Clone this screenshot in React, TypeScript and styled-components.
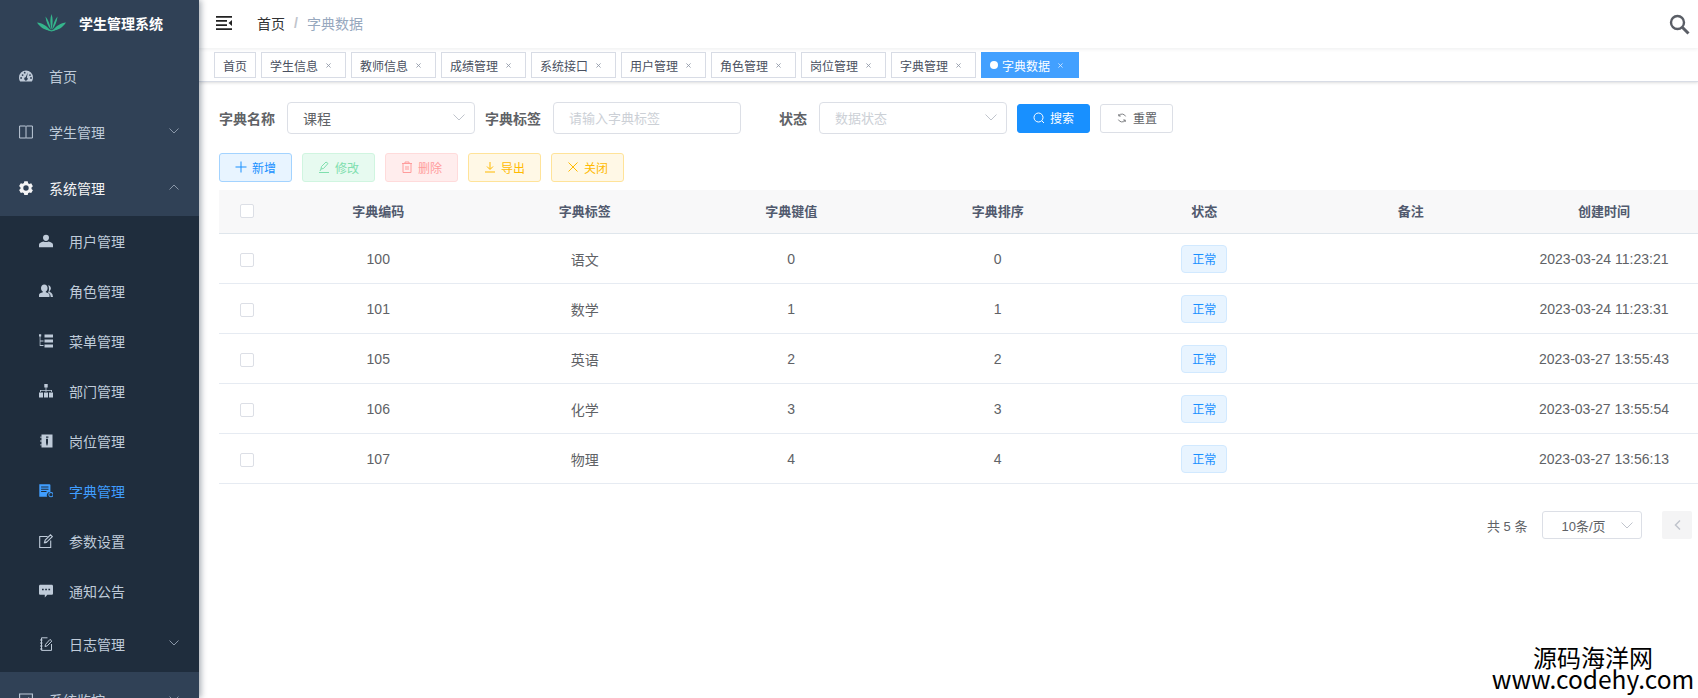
import React from "react";
import styled, { createGlobalStyle } from "styled-components";

const Global = createGlobalStyle`
  html, body { margin: 0; padding: 0; height: 100%; overflow: hidden; background: #fff; }
  body { font-family: "Liberation Sans", "Noto Sans CJK SC", sans-serif; }
  #root { height: 100%; }
  * { box-sizing: border-box; }
`;

const Shell = styled.div`
  display: flex; width: 1698px; height: 698px; overflow: hidden; position: relative;
`;
const Sidebar = styled.aside`
  width: 199px; flex: none; height: 100%; overflow: hidden; background: #304156;
  box-shadow: 2px 0 6px rgba(0, 21, 41, 0.35); position: relative; z-index: 3;
`;
const Brand = styled.div`
  height: 48px; display: flex; align-items: center; padding: 0 0 2px 37px; gap: 13px;
  color: #fff; font-size: 14px; font-weight: 700;
`;
const MenuItem = styled.div<{ $sub?: boolean; $active?: boolean; $tall?: boolean; $open?: boolean }>`
  display: flex; align-items: center; position: relative;
  height: ${(p) => (p.$sub && !p.$tall ? 50 : 56)}px;
  padding-left: ${(p) => (p.$sub ? 39 : 19)}px;
  background: ${(p) => (p.$sub ? "#1f2d3d" : "#304156")};
  color: ${(p) => (p.$active ? "#409eff" : p.$open ? "#f4f4f5" : "#bfcbd9")};
  font-size: 14px;
  svg.menu-icon { width: 14px; height: 14px; margin-right: 16px; flex: none; }
`;
const Arrow = styled.svg`
  position: absolute; right: 20px; top: 50%; margin-top: -4px; width: 10px; height: 6px;
  fill: none; stroke: #8a97a8; stroke-width: 1;
`;
const SubMenu = styled.div``;

const Main = styled.main`
  flex: 1; min-width: 0; display: flex; flex-direction: column; overflow: hidden;
`;
const Navbar = styled.header`
  height: 48px; flex: none; display: flex; align-items: center; padding: 0 8px 2px 17px;
  box-shadow: 0 1px 4px rgba(0, 21, 41, 0.08); position: relative; z-index: 2; background: #fff;
`;
const Crumbs = styled.div`
  display: flex; align-items: center; margin-left: 25px; font-size: 14px; color: #303133; flex: 1;
`;
const CrumbSep = styled.span`
  margin: 0 9px; color: #c0c4cc; font-weight: 700;
`;
const CrumbNow = styled.span`
  color: #97a8be;
`;
const TagBar = styled.nav`
  height: 34px; flex: none; display: flex; align-items: flex-start; padding: 4px 0 0 15px; gap: 5px;
  background: #fff; border-bottom: 1px solid #d8dce5;
  box-shadow: 0 1px 3px rgba(0, 0, 0, 0.12), 0 0 3px rgba(0, 0, 0, 0.04);
  position: relative; z-index: 1;
`;
const Tag = styled.span<{ $active?: boolean; $home?: boolean }>`
  height: 26px; display: inline-flex; align-items: center; font-size: 12px;
  padding: 0 ${(p) => (p.$home ? 8 : 0)}px 0 8px;
  width: ${(p) => (p.$home ? 42 : p.$active ? 98 : 85)}px;
  border: 1px solid ${(p) => (p.$active ? "#42a0ff" : "#d8dce5")};
  background: ${(p) => (p.$active ? "#42a0ff" : "#fff")};
  color: ${(p) => (p.$active ? "#fff" : "#495060")};
`;
const TagDot = styled.i`
  width: 8px; height: 8px; border-radius: 50%; background: #fff; margin-right: 4px; flex: none;
`;
const TagClose = styled.svg<{ $active?: boolean }>`
  width: 5px; height: 5px; margin-left: 8px; stroke: ${(p) => (p.$active ? "#d6e9ff" : "#8d95a3")}; stroke-width: 1; fill: none;
`;
const Content = styled.section`
  padding: 20px 0 0 20px; flex: 1; width: 1499px;
`;
const QueryForm = styled.form`
  display: flex; align-items: center; gap: 10px; height: 32px;
`;
const FormItem = styled.div`
  display: flex; align-items: center;
`;
const Label = styled.label`
  width: 68px; padding-right: 12px; text-align: right; font-size: 14px; font-weight: 700; color: #606266; white-space: nowrap;
`;
const Field = styled.div<{ $placeholder?: boolean }>`
  width: 188px; height: 32px; border: 1px solid #dcdfe6; border-radius: 4px; display: flex; align-items: center;
  justify-content: space-between; padding: 0 9px 1px 15px; font-size: ${(p) => (p.$placeholder ? 13 : 14)}px;
  color: ${(p) => (p.$placeholder ? "#ccd0d6" : "#606266")};
`;
const Chevron = styled.svg`
  width: 12px; height: 7px; fill: none; stroke: #c0c4cc; stroke-width: 1;
`;
const Button = styled.button<{ $kind: string }>`
  width: 73px; height: 29px; padding: 0 0 1px; font: inherit; font-size: 12px; border-radius: 3px; display: inline-flex;
  align-items: center; justify-content: center; gap: 5px; border: 1px solid;
  svg { width: 12px; height: 12px; fill: none; stroke: currentColor; stroke-width: 1; }
  ${(p) =>
    ({
      primary: "background:#1890ff;border-color:#1890ff;color:#fff;",
      plain: "background:#fff;border-color:#dcdfe6;color:#606266;",
      add: "background:#e8f4ff;border-color:#a3d3ff;color:#1890ff;",
      edit: "background:#e7faf0;border-color:#d0f5e0;color:#7fdfae;",
      del: "background:#ffeded;border-color:#ffdbdb;color:#ff9c9c;",
      warn: "background:#fff8e6;border-color:#ffe399;color:#ffba00;",
    } as Record<string, string>)[p.$kind]}
`;
const Toolbar = styled.div`
  display: flex; gap: 10px; margin-top: 19px;
`;
const Table = styled.table`
  margin-top: 8px; border-collapse: separate; border-spacing: 0; table-layout: fixed; width: 1675px;
`;
const Th = styled.th`
  height: 44px; padding: 0 0 2px; background: #f8f8f9; border-bottom: 1px solid #dfe6ec; font-size: 13px; font-weight: 700; color: #515a6e; text-align: center;
`;
const Td = styled.td`
  height: 50px; padding: 0; border-bottom: 1px solid #e6ebf2; font-size: 14px; color: #606266; text-align: center;
`;
const Check = styled.span`
  display: inline-block; width: 14px; height: 14px; border: 1px solid #dcdfe6; border-radius: 2px; background: #fff; vertical-align: middle;
`;
const Status = styled.span`
  display: inline-flex; align-items: center; justify-content: center; width: 46px; height: 28px; border: 1px solid #d1e9ff; border-radius: 4px;
  background: #e8f4ff; color: #1890ff; font-size: 12px; vertical-align: middle;
`;
const Pager = styled.div`
  display: flex; align-items: center; height: 28px; margin-top: 27px; padding-left: 1268px; font-size: 13px; color: #606266;
`;
const PagerSelect = styled.div`
  width: 100px; height: 28px; margin-left: 15px; border: 1px solid #dcdfe6; border-radius: 3px; display: flex; align-items: center;
  justify-content: space-between; padding: 0 8px 0 18px; color: #606266;
`;
const PagerPrev = styled.div`
  width: 30px; height: 28px; margin-left: 20px; background: #f4f4f5; border-radius: 2px; display: flex; align-items: center; justify-content: center;
  svg { width: 7px; height: 10px; fill: none; stroke: #c0c4cc; stroke-width: 1.5; }
`;
const Watermark = styled.div`
  position: absolute; right: 3px; bottom: 8px; width: 204px; text-align: center; color: #000; font-size: 24px; line-height: 22px;
  font-family: "Noto Sans CJK SC", "Noto Sans", sans-serif; z-index: 5;
`;
const WatermarkUrl = styled.div`
  font-size: 24.5px;
`;
const HeaderSearch = styled.svg`
  width: 21px; height: 21px; margin-top: 2px; fill: none; stroke: #5a5e66; stroke-width: 2.4;
`;
const Hamburger = styled.svg`
  width: 16px; height: 14px; fill: #222; flex: none; margin-top: -1px;
`;

const P = {
  dashboard: <path fillRule="evenodd" d="M7 1.500A7 7 0 0 0 0 8.500c0 1.600.5 2.900 1.200 4h11.600c.7-1.100 1.200-2.400 1.200-4a7 7 0 0 0-7-7zM2.700 6.100a.9.9 0 1 1 1.800 0 .9.900 0 0 1-1.800 0zM4.800 3.700a.9.900 0 1 1 1.800 0 .9.900 0 0 1-1.800 0zM11 7a.9.900 0 1 1 0-1.800.9.900 0 0 1 0 1.800zM1.200 9a.9.900 0 1 1 1.800 0 .9.900 0 0 1-1.800 0zM12 9.900a.9.900 0 1 1 0-1.800.9.900 0 0 1 0 1.800zM8.800 3.500l-.9 4.900a1.700 1.700 0 1 1-1.300-.2z" />,
  book: <path d="M.6 1h5.600c.4 0 .7.300.8.500.1-.2.400-.5.800-.5h5.600v12H7.800c-.4 0-.7.200-.8.400-.1-.2-.4-.4-.8-.4H.6zM7 1.500v11.500" fill="none" stroke="currentColor" strokeWidth="1" />,
  gear: <path fillRule="evenodd" d="M5.300.3h3.400l.4 1.900 1.200.7 1.900-.6 1.700 2.900-1.400 1.300v1.400l1.400 1.300-1.700 2.900-1.900-.6-1.200.7-.4 1.900H5.300l-.4-1.900-1.200-.7-1.900.6L.1 9.100l1.400-1.300V6.400L.1 5.100l1.700-2.900 1.900.6 1.200-.7zM7 4.300a2.700 2.700 0 1 0 0 5.400 2.700 2.700 0 0 0 0-5.400z" />,
  user: <path d="M7 .8a3 3 0 0 1 3 3c0 1.700-1.300 3.300-3 3.300S4 5.500 4 3.800a3 3 0 0 1 3-3zM4.500 7.500c1.500.8 3.500.8 5 0 2.300.4 4.500 1.600 4.500 3.200v2.500H0v-2.500c0-1.600 2.200-2.800 4.500-3.200z" />,
  peoples: <path d="M5.300.5C7.200.5 8.600 2.100 8.600 4c0 1.600-.8 3-1.800 3.500v.7c2 .4 3.700 1.300 3.700 2.800v2H0v-2c0-1.500 1.700-2.400 3.800-2.800v-.7C2.800 7 2 5.600 2 4 2 2.100 3.400.5 5.300.5zM9.200 1.200c1.500.2 2.700 1.400 2.700 3 0 1.200-.6 2.200-1.400 2.700v.8c1.200.5 2.400 1.300 2.900 2.500l.6 2.800h-2.300c0-1.800-.6-3.400-2.700-4.500.6-.9 1-2 1-3.300 0-1.700-.3-3-.8-4z" />,
  tree: <path d="M0 .3h2.200v2.200H0zM5.500 .5H14v3H5.500zM5.500 5.500H14v3H5.500zM5.500 10.500H14v3H5.500zM.7 2.500h.7v4.100h3.100v.8H1.400v3.700h3.100v.8H.7z" />,
  org: <path d="M5.300 0h3.400v3.500H5.300zM6.600 3.500h.8v2.400H13v2h-.8V6.700H7.400v1.200h-.8V6.700H1.800v1.200H1v-2h5.600zM0 8.500h4v5H0zM5 8.500h4v5H5zM10 8.500h4v5h-4z" />,
  post: <path fillRule="evenodd" d="M2.500.5h11v13h-11v-2.200H1v-.9h1.500V7.400H1v-.9h1.500V3.600H1v-.9h1.500zM7 2.500v1.300h2.400V2.500zm0 2.300v4.300l.6 2.400h.8l.6-2.400V4.800z" />,
  dict: <path fillRule="evenodd" d="M.3.200h10.200c.5 0 .9.400.9.900v7a3.200 3.200 0 0 0-3.200 4.700H.3zm1.800 2.400v1h7.400v-1zm0 2.200v1h7.400v-1zm0 2.200v1h5.400v-1zM12 9a1.600 1.600 0 1 1-.1 3.300A1.600 1.600 0 0 1 12 9zm0-1a2.600 2.600 0 1 0 0 5.200A2.600 2.600 0 0 0 12 8z" />,
  edit: <path d="M8.500 2.500H.7v11h11V6.500M5.500 8.500l.7-2.500L11.500.8l1.800 1.800-5.300 5.200zM5.500 9l2.600-.8" fill="none" stroke="currentColor" strokeWidth="1.100" />,
  chat: <path fillRule="evenodd" d="M1.300.8h11.400c.7 0 1.300.6 1.300 1.300v7.300c0 .7-.6 1.300-1.300 1.300H8.300L5.800 13.500v-2.800H1.300c-.7 0-1.300-.6-1.300-1.300V2.100C0 1.400.6.800 1.300.8zM3 4.800v1.500h1.700V4.800zm3.200 0v1.500h1.700V4.800zm3.200 0v1.500h1.700V4.800z" />,
  log: <path d="M8.500.8H2.500v12.600h10V7M1 3h2.500M1 6h2.500M1 9h2.500M1 12h2.500M6 9.500l.6-2.200L11 2.400l1.800 1.700-4.600 4.800z" fill="none" stroke="currentColor" strokeWidth="1" />,
  monitor: <path d="M.6 1h12.800v12H.6zM4 7.500l2 2 4-5" fill="none" stroke="currentColor" strokeWidth="1.100" />,
};

const Icon = ({ name }: { name: keyof typeof P }) => (
  <svg className="menu-icon" viewBox="0 0 14 14" fill="currentColor">{P[name]}</svg>
);
const ArrowIcon = ({ up }: { up?: boolean }) => (
  <Arrow viewBox="0 0 10 6"><path d={up ? "M.5 5.500 5 1l4.500 4.500" : "M.5.500 5 5 9.500.500"} /></Arrow>
);
const ChevronDown = () => (
  <Chevron viewBox="0 0 12 7"><path d="M.5.500 6 6 11.500.500" /></Chevron>
);

const subs: [string, keyof typeof P][] = [
  ["用户管理", "user"], ["角色管理", "peoples"], ["菜单管理", "tree"], ["部门管理", "org"],
  ["岗位管理", "post"], ["字典管理", "dict"], ["参数设置", "edit"], ["通知公告", "chat"],
];
const tags = ["学生信息", "教师信息", "成绩管理", "系统接口", "用户管理", "角色管理", "岗位管理", "字典管理"];
const rows = [
  ["100", "语文", "0", "0", "2023-03-24 11:23:21"],
  ["101", "数学", "1", "1", "2023-03-24 11:23:31"],
  ["105", "英语", "2", "2", "2023-03-27 13:55:43"],
  ["106", "化学", "3", "3", "2023-03-27 13:55:54"],
  ["107", "物理", "4", "4", "2023-03-27 13:56:13"],
];
const X = ({ active }: { active?: boolean }) => (
  <TagClose $active={active} viewBox="0 0 6 6"><path d="M.5.500l5 5M5.500.500l-5 5" /></TagClose>
);

export default function App() {
  return (
    <Shell>
      <Global />
      <Sidebar>
        <Brand>
          <svg width="29" height="18" viewBox="0 0 29 18">
            <g fill="#35b58c">
              <path d="M14.500 0c1.500 4 1.500 9 0 16-1.500-7-1.500-12 0-16z" />
              <path d="M8.500 2.500c2.500 3 4.500 8 5.500 13.500-3-4-5-8.500-5.500-13.500z" />
              <path d="M20.500 2.500c-2.500 3-4.500 8-5.500 13.500 3-4 5-8.500 5.500-13.500z" />
              <path d="M0 8.500c5 .5 10 3.500 13.500 8-5 0-10.500-3-13.500-8z" />
              <path d="M29 8.500c-5 .5-10 3.500-13.500 8 5 0 10.500-3 13.500-8z" />
              <path d="M8 14.500c2 1.500 4.500 2.500 6.500 3 2-.5 4.500-1.500 6.500-3-2 .5-4.500 1.500-6.500 1.800-2-.3-4.500-1.300-6.500-1.800z" />
            </g>
          </svg>
          学生管理系统
        </Brand>
        <MenuItem><Icon name="dashboard" />首页</MenuItem>
        <MenuItem><Icon name="book" />学生管理<ArrowIcon /></MenuItem>
        <MenuItem $open><Icon name="gear" />系统管理<ArrowIcon up /></MenuItem>
        <SubMenu>
          {subs.map(([t, i]) => (
            <MenuItem key={t} $sub $active={t === "字典管理"}><Icon name={i} />{t}</MenuItem>
          ))}
          <MenuItem $sub $tall><Icon name="log" />日志管理<ArrowIcon /></MenuItem>
        </SubMenu>
        <MenuItem><Icon name="monitor" />系统监控<ArrowIcon /></MenuItem>
      </Sidebar>
      <Main>
        <Navbar>
          <Hamburger viewBox="0 0 16 14">
            <path d="M0 0h16v1.700H0zM0 4.100h11v1.700H0zM0 8.200h11v1.700H0zM0 12.300h16V14H0zM16 4v6l-3.500-3z" />
          </Hamburger>
          <Crumbs>首页<CrumbSep>/</CrumbSep><CrumbNow>字典数据</CrumbNow></Crumbs>
          <HeaderSearch viewBox="0 0 21 21"><circle cx="8.500" cy="8.500" r="6.500" /><path d="M13.500 13.500l6 6" strokeWidth="3" /></HeaderSearch>
        </Navbar>
        <TagBar>
          <Tag $home>首页</Tag>
          {tags.map((t) => <Tag key={t}>{t}<X /></Tag>)}
          <Tag $active><TagDot />字典数据<X active /></Tag>
        </TagBar>
        <Content>
          <QueryForm>
            <FormItem><Label>字典名称</Label><Field>课程<ChevronDown /></Field></FormItem>
            <FormItem><Label>字典标签</Label><Field $placeholder>请输入字典标签</Field></FormItem>
            <FormItem><Label>状态</Label><Field $placeholder>数据状态<ChevronDown /></Field></FormItem>
            <Button type="button" $kind="primary"><svg viewBox="0 0 12 12"><circle cx="5.500" cy="5.500" r="4.500" /><path d="M9 9l2 2" /></svg>搜索</Button>
            <Button type="button" $kind="plain"><svg viewBox="-1.500 -1.500 15 15"><path d="M10.500 4A5 5 0 0 0 2 3M1.500 8A5 5 0 0 0 10 9M2 1v2.500h2.500M10 11V8.500H7.500" /></svg>重置</Button>
          </QueryForm>
          <Toolbar>
            <Button type="button" $kind="add"><svg viewBox="0 0 12 12"><path d="M6 .5v11M.5 6h11" /></svg>新增</Button>
            <Button type="button" $kind="edit"><svg viewBox="0 0 12 12"><path d="M3 8l.5-2.500L8 1l2 1.500L5.500 7.500zM1 11.500h10M3 8l-1 2" /></svg>修改</Button>
            <Button type="button" $kind="del"><svg viewBox="0 0 12 12"><path d="M1 2.500h10M4 2.500V1h4v1.500M2 2.500V11.500h8v-9M5 5v4M7 5v4" /></svg>删除</Button>
            <Button type="button" $kind="warn"><svg viewBox="0 0 12 12"><path d="M6 1v7M3 5.500L6 8.500l3-3M1 11h10" /></svg>导出</Button>
            <Button type="button" $kind="warn"><svg viewBox="0 0 12 12"><path d="M1.500 1.500l9 9M10.500 1.500l-9 9" /></svg>关闭</Button>
          </Toolbar>
          <Table>
            <colgroup>
              <col style={{ width: 56 }} />
              {[0, 1, 2, 3, 4, 5].map((i) => <col key={i} style={{ width: 206.5 }} />)}
              <col style={{ width: 180 }} />
              <col style={{ width: 200 }} />
            </colgroup>
            <thead>
              <tr>
                <Th><Check /></Th>
                {["字典编码", "字典标签", "字典键值", "字典排序", "状态", "备注", "创建时间"].map((h) => <Th key={h}>{h}</Th>)}
                <Th />
              </tr>
            </thead>
            <tbody>
              {rows.map((r) => (
                <tr key={r[0]}>
                  <Td><Check /></Td>
                  <Td>{r[0]}</Td><Td>{r[1]}</Td><Td>{r[2]}</Td><Td>{r[3]}</Td>
                  <Td><Status>正常</Status></Td>
                  <Td />
                  <Td>{r[4]}</Td>
                  <Td />
                </tr>
              ))}
            </tbody>
          </Table>
          <Pager>
            共 5 条
            <PagerSelect>10条/页<ChevronDown /></PagerSelect>
            <PagerPrev><svg viewBox="0 0 7 10"><path d="M6 .5L1.500 5 6 9.500" /></svg></PagerPrev>
          </Pager>
        </Content>
      </Main>
      <Watermark>源码海洋网<WatermarkUrl>www.codehy.com</WatermarkUrl></Watermark>
    </Shell>
  );
}
